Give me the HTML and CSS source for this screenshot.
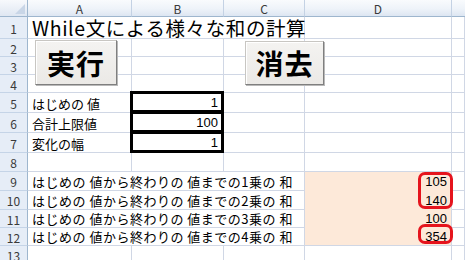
FILE: index.html
```html
<!DOCTYPE html>
<html lang="ja">
<head>
<meta charset="utf-8">
<link rel="stylesheet" href="styles.css">
</head>
<body>
<div class="sheet">
  <div class="c corner"></div><div class="c ch">A</div><div class="c ch">B</div><div class="c ch">C</div><div class="c ch">D</div><div class="c ch last"></div>

  <div class="c rh">1</div><div class="c span3 title">While文による様々な和の計算</div><div class="c"></div><div class="c"></div>
  <div class="c rh">2</div><div class="c"></div><div class="c"></div><div class="c"></div><div class="c"></div><div class="c"></div>
  <div class="c rh">3</div><div class="c"></div><div class="c"></div><div class="c"></div><div class="c"></div><div class="c"></div>
  <div class="c rh">4</div><div class="c"></div><div class="c"></div><div class="c"></div><div class="c"></div><div class="c"></div>

  <div class="c rh">5</div><div class="c txt">はじめの 値</div><div class="c num box">1</div><div class="c"></div><div class="c"></div><div class="c"></div>
  <div class="c rh">6</div><div class="c txt">合計上限値</div><div class="c num box">100</div><div class="c"></div><div class="c"></div><div class="c"></div>
  <div class="c rh">7</div><div class="c txt">変化の幅</div><div class="c num box">1</div><div class="c"></div><div class="c"></div><div class="c"></div>
  <div class="c rh">8</div><div class="c"></div><div class="c"></div><div class="c"></div><div class="c"></div><div class="c"></div>

  <div class="c rh">9</div><div class="c span3 txt wide">はじめの 値から終わりの 値までの1乗の 和</div><div class="c num fill">105</div><div class="c"></div>
  <div class="c rh">10</div><div class="c span3 txt wide">はじめの 値から終わりの 値までの2乗の 和</div><div class="c num fill">140</div><div class="c"></div>
  <div class="c rh">11</div><div class="c span3 txt wide">はじめの 値から終わりの 値までの3乗の 和</div><div class="c num fill">100</div><div class="c"></div>
  <div class="c rh">12</div><div class="c span3 txt wide">はじめの 値から終わりの 値までの4乗の 和</div><div class="c num fill end">354</div><div class="c"></div>
  <div class="c rh">13</div><div class="c"></div><div class="c"></div><div class="c"></div><div class="c"></div><div class="c"></div>

  <div class="btn btn-run">実行</div>
  <div class="btn btn-clear">消去</div>
  <div class="mark mark-a"></div>
  <div class="mark mark-b"></div>
</div>
</body>
</html>
```

FILE: styles.css
```css
html, body {
  margin: 0;
  padding: 0;
  background: #fff;
}

body {
  width: 465px;
  height: 260px;
  overflow: hidden;
  font-family: "Noto Sans CJK JP", "Liberation Sans", sans-serif;
  color: #000;
}

.sheet {
  position: relative;
  display: grid;
  grid-template-columns: 28px 104px 92px 81px 147px 1fr;
  grid-template-rows: 17px 22px 18px 18px 18px 20px 20px 20px 19px 19px 19px 18px 18px 19px;
  width: 465px;
}

.c {
  box-sizing: border-box;
  border-right: 1px solid #d0d7e5;
  border-bottom: 1px solid #d0d7e5;
  font-size: 13px;
  line-height: 1;
  display: flex;
  align-items: flex-end;
  padding: 0 3px 2px 3px;
  white-space: nowrap;
  min-width: 0;
}

.corner {
  position: relative;
  background: linear-gradient(#f7f9fc, #dfe7f2);
  border-right: 1px solid #9eb6ce;
  border-bottom: 1px solid #9eb6ce;
}

.corner::after {
  content: "";
  position: absolute;
  right: 2px;
  bottom: 2px;
  width: 0;
  height: 0;
  border-left: 10px solid transparent;
  border-bottom: 10px solid #c9d6e7;
}

.ch {
  background: linear-gradient(#f9fbfd 0%, #eef3f9 55%, #dde6f2 100%);
  border-right: 1px solid #c4d2e4;
  border-bottom: 1px solid #9eb6ce;
  justify-content: center;
  align-items: center;
  padding: 1px 0 0 0;
  font-size: 12px;
  color: #3a3a3a;
}

.ch.last {
  border-right: none;
}

.rh {
  background: #e6edf7;
  border-right: 1px solid #9eb6ce;
  border-bottom: 1px solid #c5d4e7;
  justify-content: center;
  align-items: center;
  padding: 2px 0 0 0;
  font-size: 12px;
  color: #3a3a3a;
}

.span3 {
  grid-column: span 3;
}

.title {
  font-size: 19.5px;
  letter-spacing: 0.6px;
  padding: 0 0 1px 4px;
  align-items: flex-end;
}

.txt {
  padding-left: 4px;
  padding-bottom: 2px;
}

.wide {
  letter-spacing: 0.5px;
}

.num {
  justify-content: flex-end;
  padding-right: 4px;
  font-family: "Liberation Sans", "Noto Sans CJK JP", sans-serif;
  font-size: 13px;
}

.box {
  position: relative;
  padding-right: 5px;
  padding-bottom: 3px;
}

.box::after {
  content: "";
  position: absolute;
  left: -2px;
  top: -2px;
  right: -1px;
  bottom: -1px;
  border: 3px solid #000;
  pointer-events: none;
}

.fill {
  background: #fde9d9;
  border-bottom-color: #fde9d9;
}

.fill.end {
  border-bottom-color: #d0d7e5;
}

.btn {
  position: absolute;
  box-sizing: border-box;
  display: flex;
  align-items: center;
  justify-content: center;
  background: linear-gradient(#f4f3f1, #ebe9e6);
  border: 1px solid #c8c6c2;
  border-right-color: #7f7f7f;
  border-bottom-color: #7f7f7f;
  box-shadow: inset 1px 1px 0 #ffffff, 1px 1px 0 #b9b9b9;
  font-size: 28px;
  font-weight: 700;
  line-height: 1;
  color: #000;
  letter-spacing: 1px;
}

.btn-run {
  left: 35px;
  top: 40px;
  width: 82px;
  height: 45px;
}

.btn-clear {
  left: 245px;
  top: 41px;
  width: 79px;
  height: 44px;
}

.mark {
  position: absolute;
  box-sizing: border-box;
  border: 3px solid #e5141d;
  border-radius: 7px;
}

.mark-a {
  left: 418px;
  top: 172px;
  width: 35px;
  height: 37px;
}

.mark-b {
  left: 418px;
  top: 224px;
  width: 35px;
  height: 20px;
}
```
